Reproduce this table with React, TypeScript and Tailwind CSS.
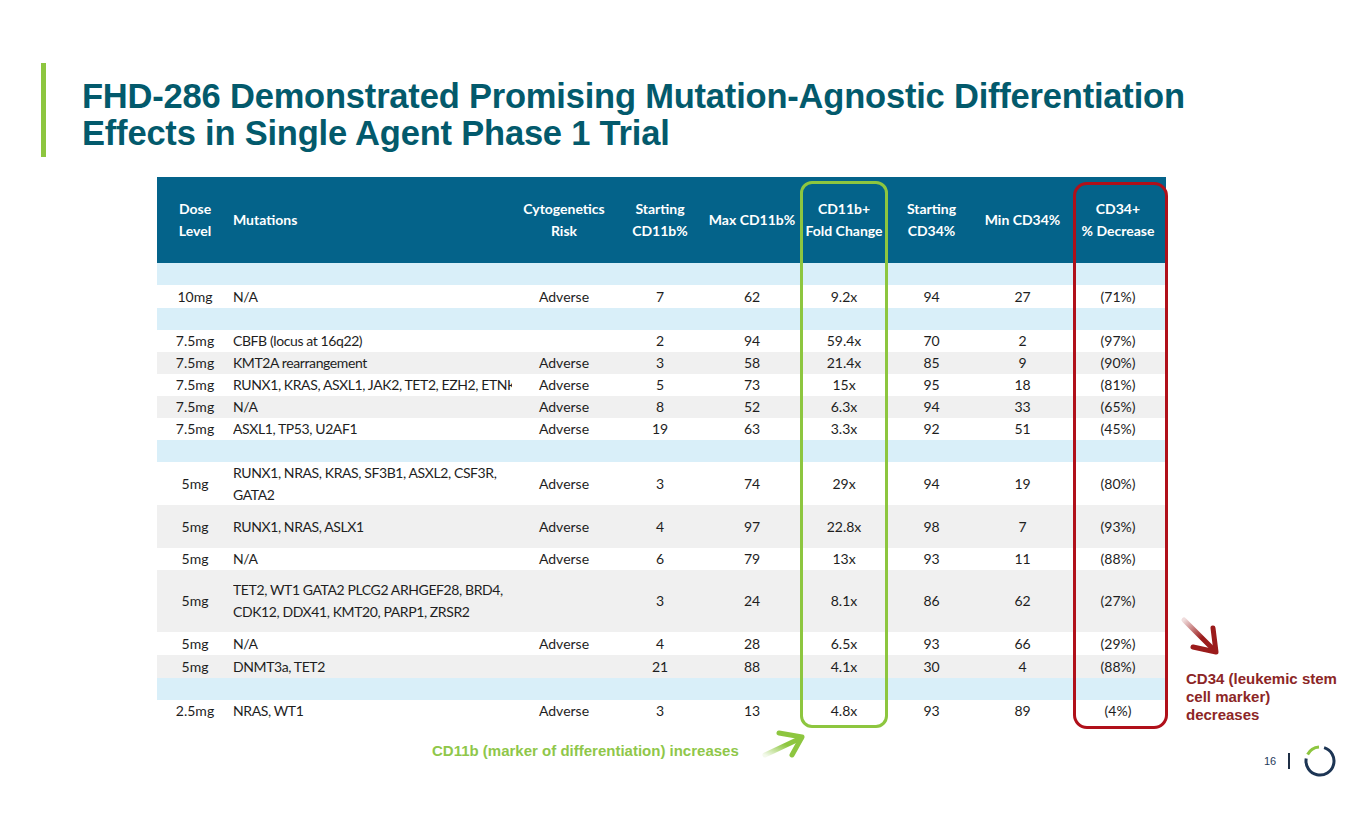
import React from "react";

type Row = {
  kind: "spacer" | "data";
  d?: string;
  m?: string[];
  c?: string;
  a?: string;
  b?: string;
  f?: string;
  g?: string;
  h?: string;
  p?: string;
  gray?: boolean;
  hc: string;
};

const rows: Row[] = [
  { kind: "spacer", hc: "h-[22px]" },
  { kind: "data", d: "10mg", m: ["N/A"], c: "Adverse", a: "7", b: "62", f: "9.2x", g: "94", h: "27", p: "(71%)", hc: "h-[23px]" },
  { kind: "spacer", hc: "h-[22px]" },
  { kind: "data", d: "7.5mg", m: ["CBFB (locus at 16q22)"], c: "", a: "2", b: "94", f: "59.4x", g: "70", h: "2", p: "(97%)", hc: "h-[22px]" },
  { kind: "data", d: "7.5mg", m: ["KMT2A rearrangement"], c: "Adverse", a: "3", b: "58", f: "21.4x", g: "85", h: "9", p: "(90%)", gray: true, hc: "h-[22px]" },
  { kind: "data", d: "7.5mg", m: ["RUNX1, KRAS, ASXL1, JAK2, TET2, EZH2, ETNK"], c: "Adverse", a: "5", b: "73", f: "15x", g: "95", h: "18", p: "(81%)", hc: "h-[22px]" },
  { kind: "data", d: "7.5mg", m: ["N/A"], c: "Adverse", a: "8", b: "52", f: "6.3x", g: "94", h: "33", p: "(65%)", gray: true, hc: "h-[22px]" },
  { kind: "data", d: "7.5mg", m: ["ASXL1, TP53, U2AF1"], c: "Adverse", a: "19", b: "63", f: "3.3x", g: "92", h: "51", p: "(45%)", hc: "h-[22px]" },
  { kind: "spacer", hc: "h-[22px]" },
  { kind: "data", d: "5mg", m: ["RUNX1, NRAS, KRAS, SF3B1, ASXL2, CSF3R,", "GATA2"], c: "Adverse", a: "3", b: "74", f: "29x", g: "94", h: "19", p: "(80%)", hc: "h-[43px]" },
  { kind: "data", d: "5mg", m: ["RUNX1, NRAS, ASLX1"], c: "Adverse", a: "4", b: "97", f: "22.8x", g: "98", h: "7", p: "(93%)", gray: true, hc: "h-[43px]" },
  { kind: "data", d: "5mg", m: ["N/A"], c: "Adverse", a: "6", b: "79", f: "13x", g: "93", h: "11", p: "(88%)", hc: "h-[22px]" },
  { kind: "data", d: "5mg", m: ["TET2, WT1 GATA2 PLCG2 ARHGEF28, BRD4,", "CDK12, DDX41, KMT20, PARP1, ZRSR2"], c: "", a: "3", b: "24", f: "8.1x", g: "86", h: "62", p: "(27%)", gray: true, hc: "h-[62px]" },
  { kind: "data", d: "5mg", m: ["N/A"], c: "Adverse", a: "4", b: "28", f: "6.5x", g: "93", h: "66", p: "(29%)", hc: "h-[23px]" },
  { kind: "data", d: "5mg", m: ["DNMT3a, TET2"], c: "", a: "21", b: "88", f: "4.1x", g: "30", h: "4", p: "(88%)", gray: true, hc: "h-[23px]" },
  { kind: "spacer", hc: "h-[22px]" },
  { kind: "data", d: "2.5mg", m: ["NRAS, WT1"], c: "Adverse", a: "3", b: "13", f: "4.8x", g: "93", h: "89", p: "(4%)", hc: "h-[22px]" },
];

const cols = "grid grid-cols-[76px_279px_104px_88px_96px_88px_87px_95px_96px]";

function Cell({ children, left }: { children?: React.ReactNode; left?: boolean }) {
  return (
    <div className={`flex items-center ${left ? "justify-start" : "justify-center text-center"} overflow-hidden whitespace-nowrap`}>
      {children}
    </div>
  );
}

export default function App() {
  return (
    <div className="relative w-[1365px] h-[829px] bg-white overflow-hidden" style={{ fontFamily: "Lato, 'Open Sans', sans-serif" }}>
      {/* Title */}
      <div className="flex items-start pt-[63px] pl-[41px] gap-[36px]">
        <div className="w-[5px] h-[94px] bg-[#8dc63f]" />
        <h1
          className="text-[34.5px] leading-[37px] font-bold text-[#035a6c] pt-[15px] tracking-[-0.2px]"
          style={{ fontFamily: "'Liberation Sans', Arial, sans-serif" }}
        >
          FHD-286 Demonstrated Promising Mutation-Agnostic Differentiation
          <br />
          Effects in Single Agent Phase 1 Trial
        </h1>
      </div>

      {/* Table */}
      <div className="ml-[157px] mt-[20px] w-[1009px] text-[14px] text-[#1e1e1e]">
        <div className={`${cols} h-[86px] bg-[#04638a] text-white font-bold leading-[22px]`}>
          <Cell>
            <span>Dose<br />Level</span>
          </Cell>
          <Cell left>Mutations</Cell>
          <Cell>
            <span>Cytogenetics<br />Risk</span>
          </Cell>
          <Cell>
            <span>Starting<br />CD11b%</span>
          </Cell>
          <Cell>Max CD11b%</Cell>
          <Cell>
            <span>CD11b+<br />Fold Change</span>
          </Cell>
          <Cell>
            <span>Starting<br />CD34%</span>
          </Cell>
          <Cell>Min CD34%</Cell>
          <Cell>
            <span>CD34+<br />% Decrease</span>
          </Cell>
        </div>
        {rows.map((r, i) =>
          r.kind === "spacer" ? (
            <div key={i} className={`${r.hc} bg-[#d9eff9]`} />
          ) : (
            <div key={i} className={`${cols} ${r.hc} ${r.gray ? "bg-[#f0f0f0]" : "bg-white"} leading-[22px]`}>
              <Cell>{r.d}</Cell>
              <Cell left>
                <span className="tracking-[-0.4px]">
                  {r.m!.map((t, j) => (
                    <React.Fragment key={j}>
                      {j > 0 && <br />}
                      {t}
                    </React.Fragment>
                  ))}
                </span>
              </Cell>
              <Cell>{r.c}</Cell>
              <Cell>{r.a}</Cell>
              <Cell>{r.b}</Cell>
              <Cell>{r.f}</Cell>
              <Cell>{r.g}</Cell>
              <Cell>{r.h}</Cell>
              <Cell>{r.p}</Cell>
            </div>
          )
        )}
      </div>

      {/* Highlight boxes */}
      <div className="absolute left-[800px] top-[181px] w-[88px] h-[547px] border-[3px] border-[#8dc63f] rounded-[12px]" />
      <div className="absolute left-[1073px] top-[182px] w-[95px] h-[547px] border-[3px] border-[#b0101a] rounded-[14px]" />

      {/* Green annotation */}
      <div
        className="absolute left-[432px] top-[742px] text-[15px] leading-[18px] font-bold text-[#8fc74a]"
        style={{ fontFamily: "'Liberation Sans', Arial, sans-serif" }}
      >
        CD11b (marker of differentiation) increases
      </div>
      <svg className="absolute left-[755px] top-[725px]" width="60" height="40" viewBox="0 0 60 40">
        <defs>
          <linearGradient id="gfade" x1="0" y1="1" x2="1" y2="0">
            <stop offset="0" stopColor="#8dc63f" stopOpacity="0.1" />
            <stop offset="0.6" stopColor="#8dc63f" stopOpacity="1" />
          </linearGradient>
        </defs>
        <path d="M10 30 L46 13" stroke="url(#gfade)" strokeWidth="5" strokeLinecap="round" />
        <path d="M24 8 L47 12 L37 30" stroke="#8dc63f" strokeWidth="5" fill="none" strokeLinecap="round" strokeLinejoin="round" />
      </svg>

      {/* Red annotation */}
      <svg className="absolute left-[1176px] top-[612px]" width="50" height="50" viewBox="0 0 50 50">
        <defs>
          <linearGradient id="rfade" x1="0" y1="0" x2="1" y2="1">
            <stop offset="0" stopColor="#9b1b1b" stopOpacity="0.15" />
            <stop offset="0.6" stopColor="#9b1b1b" stopOpacity="1" />
          </linearGradient>
        </defs>
        <path d="M8 8 L38 38" stroke="url(#rfade)" strokeWidth="5" strokeLinecap="round" />
        <path d="M37 16 L40 40 L17 35" stroke="#9b1b1b" strokeWidth="5" fill="none" strokeLinecap="round" strokeLinejoin="round" />
      </svg>
      <div
        className="absolute left-[1186px] top-[670px] text-[15px] leading-[18px] font-bold text-[#8c2626]"
        style={{ fontFamily: "'Liberation Sans', Arial, sans-serif" }}
      >
        CD34 (leukemic stem
        <br />
        cell marker)
        <br />
        decreases
      </div>

      {/* Footer */}
      <div className="absolute left-[1264px] top-[745px] flex items-center gap-[10px] h-[32px]">
        <span className="text-[11px] text-[#1f3a5a]" style={{ fontFamily: "'Liberation Sans', Arial, sans-serif" }}>
          16
        </span>
        <div className="w-[1.5px] h-[16px] bg-[#1f2f45] ml-[2px]" />
        <svg width="32" height="32" viewBox="0 0 32 32" className="ml-[4px]">
          <path d="M20.1 2.6 A14 14 0 1 1 2.2 13.6" stroke="#1d3554" strokeWidth="3" fill="none" />
          <path d="M3.6 9.5 A14 14 0 0 1 15 2" stroke="#8dc63f" strokeWidth="3" fill="none" />
        </svg>
      </div>
    </div>
  );
}
